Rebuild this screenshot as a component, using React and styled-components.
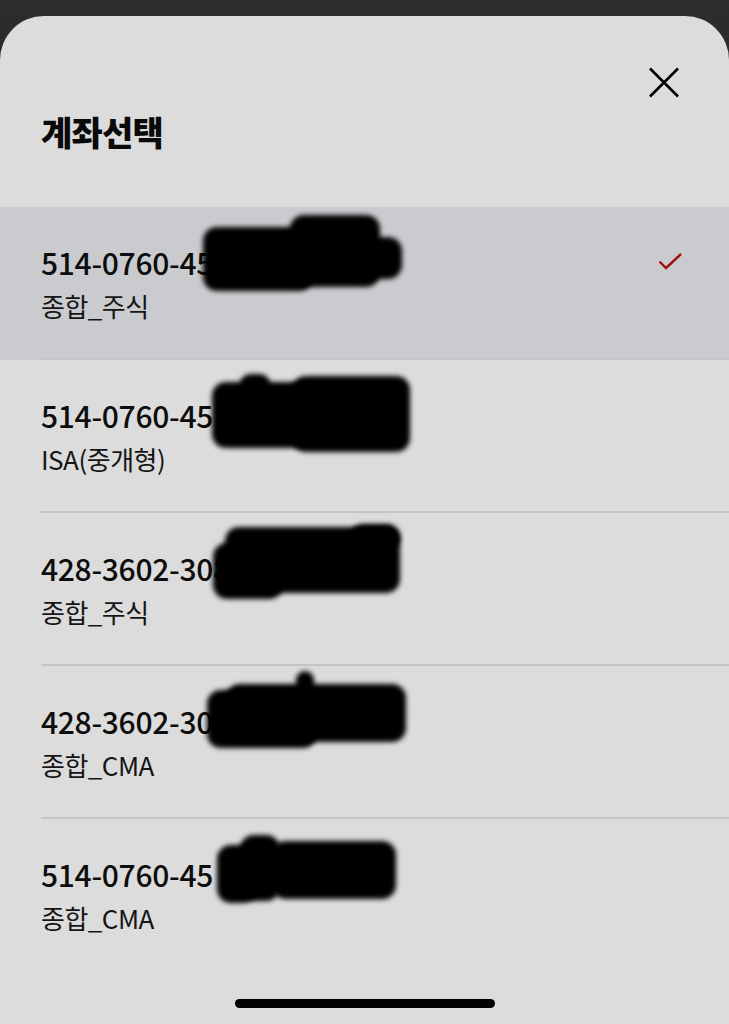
import React from "react";
import styled, { createGlobalStyle } from "styled-components";

const GlobalStyle = createGlobalStyle`
  html, body {
    margin: 0;
    padding: 0;
    background-color: #282828;
  }
  body {
    font-family: "Noto Sans CJK KR", "Noto Sans", sans-serif;
    color: #111;
  }
`;

const Screen = styled.div`
  display: flex;
  flex-direction: column;
  min-height: 100vh;
  padding-top: 16px;
  box-sizing: border-box;
  background: linear-gradient(#2c2c2c, #242424);
`;

const Sheet = styled.div`
  flex: 1;
  display: flex;
  flex-direction: column;
  background-color: #dcdcdc;
  border-radius: 44px 44px 0 0;
  overflow: hidden;
`;

const Header = styled.div`
  height: 191px;
  display: flex;
  flex-direction: column;
  padding: 51px 49px 0 41px;
  box-sizing: border-box;
`;

const CloseRow = styled.div`
  display: flex;
  justify-content: flex-end;
`;

const CloseButton = styled.button`
  width: 32px;
  height: 31px;
  padding: 0;
  border: none;
  background: none;
  display: flex;
`;

const Title = styled.h1`
  margin: 12px 0 0;
  font-size: 34px;
  line-height: 44px;
  font-weight: 900;
  letter-spacing: -0.8px;
  color: #0a0a0a;
`;

const List = styled.div`
  display: flex;
  flex-direction: column;
`;

const Row = styled.div`
  position: relative;
  height: 153px;
  display: flex;
  align-items: center;
  padding: 0 45px 0 41px;
  box-sizing: border-box;
  background-color: ${(p) => (p.$selected ? "#c9cbce" : "transparent")};

  &::after {
    content: "";
    position: absolute;
    left: 41px;
    right: 0;
    bottom: 0;
    height: 2px;
    background-color: ${(p) => (p.$last ? "transparent" : "#c3c4c6")};
  }
`;

const Info = styled.div`
  flex: 1;
  display: flex;
  flex-direction: column;
  gap: 8px;
`;

const NumberLine = styled.div`
  display: flex;
  align-items: center;
  justify-content: space-between;
`;

const Number = styled.div`
  font-size: 30px;
  line-height: 36px;
  font-weight: 500;
  letter-spacing: -0.3px;
  color: #0d0d0d;
`;

const Kind = styled.div`
  font-size: 26px;
  line-height: 36px;
  font-weight: 400;
  letter-spacing: -0.5px;
  color: #151515;
`;

const Blob = styled.div`
  position: absolute;
  left: ${(p) => p.$x}px;
  top: ${(p) => p.$y}px;
  width: ${(p) => p.$w}px;
  height: ${(p) => p.$h}px;
  background-color: #000;
  border-radius: 14px;
  filter: blur(2.5px);
`;

const HomeBar = styled.div`
  margin: auto auto 16px;
  width: 260px;
  height: 9px;
  border-radius: 5px;
  background-color: #000;
`;

const CloseIcon = () => (
  <svg width="32" height="31" viewBox="0 0 32 31">
    <path d="M2 1.5 L30 29.5 M30 1.5 L2 29.5" stroke="#000" strokeWidth="2.6" fill="none" />
  </svg>
);

const CheckIcon = () => (
  <svg width="26" height="20" viewBox="0 0 26 20">
    <path d="M1.5 9.5 L8 16 L23 2" stroke="#a3100f" strokeWidth="2.4" fill="none" />
  </svg>
);

const accounts = [
  {
    number: "514-0760-45",
    kind: "종합_주식",
    selected: true,
    blobs: [
      { x: 203, y: 20, w: 110, h: 64 },
      { x: 290, y: 8, w: 90, h: 72 },
      { x: 340, y: 30, w: 62, h: 42 },
    ],
  },
  {
    number: "514-0760-45",
    kind: "ISA(중개형)",
    blobs: [
      { x: 212, y: 22, w: 100, h: 66 },
      { x: 240, y: 14, w: 30, h: 20 },
      { x: 292, y: 16, w: 118, h: 76 },
    ],
  },
  {
    number: "428-3602-308",
    kind: "종합_주식",
    blobs: [
      { x: 213, y: 30, w: 70, h: 56 },
      { x: 225, y: 14, w: 175, h: 66 },
      { x: 350, y: 11, w: 50, h: 26 },
    ],
  },
  {
    number: "428-3602-308",
    kind: "종합_CMA",
    blobs: [
      { x: 207, y: 24, w: 110, h: 58 },
      { x: 226, y: 18, w: 180, h: 58 },
      { x: 296, y: 5, w: 18, h: 24 },
    ],
  },
  {
    number: "514-0760-45",
    kind: "종합_CMA",
    blobs: [
      { x: 217, y: 26, w: 40, h: 58 },
      { x: 240, y: 16, w: 40, h: 66 },
      { x: 272, y: 22, w: 124, h: 58 },
    ],
  },
];

export default function App() {
  return (
    <>
      <GlobalStyle />
      <Screen>
        <Sheet>
          <Header>
            <CloseRow>
              <CloseButton aria-label="닫기">
                <CloseIcon />
              </CloseButton>
            </CloseRow>
            <Title>계좌선택</Title>
          </Header>
          <List>
            {accounts.map((a, i) => (
              <Row key={i} $selected={a.selected} $last={i === accounts.length - 1}>
                <Info>
                  <NumberLine>
                    <Number>{a.number}</Number>
                    {a.selected && <CheckIcon />}
                  </NumberLine>
                  <Kind>{a.kind}</Kind>
                </Info>
                {a.blobs.map((b, j) => (
                  <Blob key={j} $x={b.x} $y={b.y} $w={b.w} $h={b.h} />
                ))}
              </Row>
            ))}
          </List>
          <HomeBar />
        </Sheet>
      </Screen>
    </>
  );
}
